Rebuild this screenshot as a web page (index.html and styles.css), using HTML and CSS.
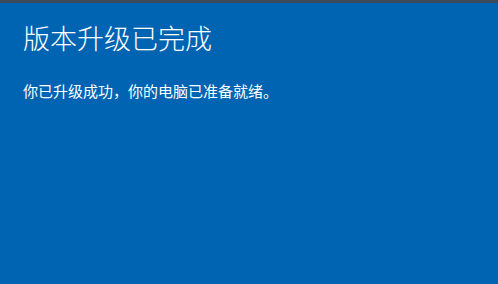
FILE: index.html
```html
<!DOCTYPE html>
<html lang="zh-CN">
<head>
    <meta charset="UTF-8">
    <meta name="viewport" content="width=device-width, initial-scale=1.0">
    <title>版本升级已完成</title>
    <link rel="stylesheet" href="styles.css">
</head>
<body>
    <div class="screen">
        <h1>版本升级已完成</h1>
        <p>你已升级成功，你的电脑已准备就绪。</p>
    </div>
</body>
</html>
```

FILE: styles.css
```css
/* Pantalla de actualización */
html, body {
    margin: 0;
    padding: 0;
    height: 100%;
}
body {
    background-color: #0064b2;
    font-family: "Noto Sans CJK SC", "Noto Sans", sans-serif;
    color: #fff;
}
.screen {
    height: 100%;
    box-sizing: border-box;
    padding: 17px 23px 0;
    border-top: 3px solid transparent;
    border-image: linear-gradient(#3c4b5c, #1d5f98) 1;
}
h1 {
    margin: 0;
    font-size: 27px;
    font-weight: 300;
    line-height: 36px;
}
p {
    margin: 25px 0 0;
    font-size: 15px;
    line-height: 20px;
}
```
